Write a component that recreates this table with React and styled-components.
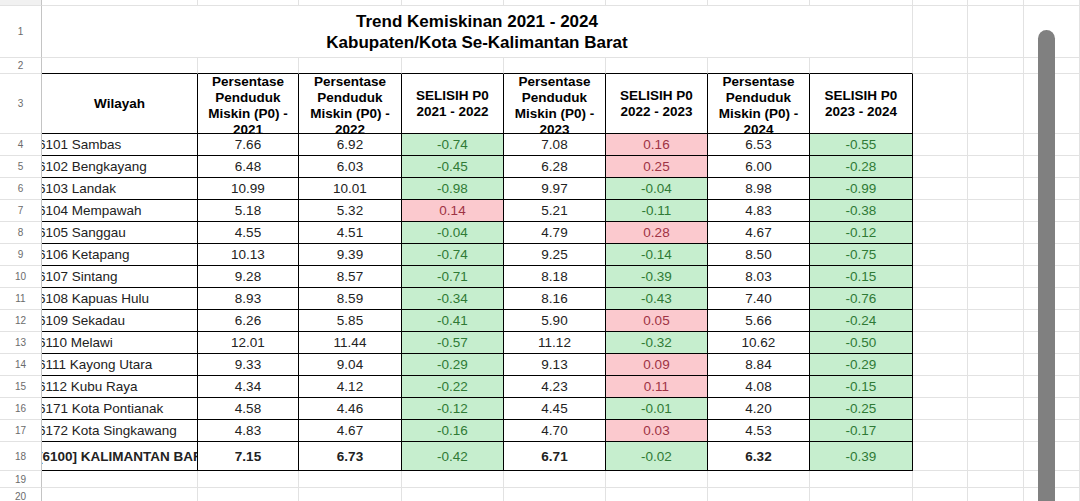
import React from "react";
import styled, { createGlobalStyle, css } from "styled-components";

const GlobalStyle = createGlobalStyle`
  html, body {
    margin: 0;
    padding: 0;
    background: #ffffff;
    overflow: hidden;
  }
  body {
    font-family: "Liberation Sans", Arial, sans-serif;
  }
`;

const rows = [
  ["6101 Sambas", "7.66", "6.92", "-0.74", "7.08", "0.16", "6.53", "-0.55"],
  ["6102 Bengkayang", "6.48", "6.03", "-0.45", "6.28", "0.25", "6.00", "-0.28"],
  ["6103 Landak", "10.99", "10.01", "-0.98", "9.97", "-0.04", "8.98", "-0.99"],
  ["6104 Mempawah", "5.18", "5.32", "0.14", "5.21", "-0.11", "4.83", "-0.38"],
  ["6105 Sanggau", "4.55", "4.51", "-0.04", "4.79", "0.28", "4.67", "-0.12"],
  ["6106 Ketapang", "10.13", "9.39", "-0.74", "9.25", "-0.14", "8.50", "-0.75"],
  ["6107 Sintang", "9.28", "8.57", "-0.71", "8.18", "-0.39", "8.03", "-0.15"],
  ["6108 Kapuas Hulu", "8.93", "8.59", "-0.34", "8.16", "-0.43", "7.40", "-0.76"],
  ["6109 Sekadau", "6.26", "5.85", "-0.41", "5.90", "0.05", "5.66", "-0.24"],
  ["6110 Melawi", "12.01", "11.44", "-0.57", "11.12", "-0.32", "10.62", "-0.50"],
  ["6111 Kayong Utara", "9.33", "9.04", "-0.29", "9.13", "0.09", "8.84", "-0.29"],
  ["6112 Kubu Raya", "4.34", "4.12", "-0.22", "4.23", "0.11", "4.08", "-0.15"],
  ["6171 Kota Pontianak", "4.58", "4.46", "-0.12", "4.45", "-0.01", "4.20", "-0.25"],
  ["6172 Kota Singkawang", "4.83", "4.67", "-0.16", "4.70", "0.03", "4.53", "-0.17"],
];
const total = ["[6100] KALIMANTAN BARAT", "7.15", "6.73", "-0.42", "6.71", "-0.02", "6.32", "-0.39"];

const headers = [
  "Wilayah",
  "Persentase Penduduk Miskin (P0) - 2021",
  "Persentase Penduduk Miskin (P0) - 2022",
  "SELISIH P0 2021 - 2022",
  "Persentase Penduduk Miskin (P0) - 2023",
  "SELISIH P0 2022 - 2023",
  "Persentase Penduduk Miskin (P0) - 2024",
  "SELISIH P0 2023 - 2024",
];

const diffCols = [3, 5, 7];

const Sheet = styled.div`
  position: relative;
  width: 1080px;
  height: 501px;
  overflow: hidden;
  display: grid;
  grid-template-columns: 42px 156px 101px 103px 102px 102px 102px 102px 103px 55px 56px 1fr;
  grid-template-rows: 6px 52px 16px 60px repeat(14, 22px) 29px 17px 17px 17px;
`;

const Cell = styled.div`
  box-sizing: border-box;
  border-right: 1px solid ${(p) => (p.$rb ? "#000" : "#e2e2e2")};
  border-bottom: 1px solid ${(p) => (p.$bb ? "#000" : "#e2e2e2")};
  display: flex;
  align-items: center;
  justify-content: center;
  overflow: hidden;
  white-space: nowrap;
  font-size: 13.5px;
  color: #222;
  font-weight: ${(p) => (p.$bold ? 700 : 400)};
  ${(p) =>
    p.$fill === "green" &&
    css`
      background: #c6eece;
      color: #2f7a35;
    `}
  ${(p) =>
    p.$fill === "red" &&
    css`
      background: #fbc9ce;
      color: #9e3344;
    `}
`;

const RowHead = styled.div`
  box-sizing: border-box;
  border-right: 1px solid #c4c4c4;
  border-bottom: 1px solid #e2e2e2;
  background: ${(p) => (p.$corner ? "#f1f1f1" : "#fff")};
  display: flex;
  align-items: center;
  justify-content: center;
  font-size: 10px;
  color: #6b6b6b;
`;

const Title = styled(Cell)`
  grid-column: 2 / 10;
  flex-direction: column;
  font-size: 17px;
  font-weight: 700;
  color: #000;
  line-height: 21px;
`;

const HeadCell = styled(Cell)`
  white-space: normal;
  text-align: center;
  font-weight: 700;
  color: #000;
  line-height: 16px;
  padding: ${(p) => (p.$tall ? "4px 7px 0" : "0 7px")};
`;

const NameCell = styled(Cell)`
  justify-content: flex-start;
  text-indent: -4px;
`;

const Scrollbar = styled.div`
  position: absolute;
  left: 1038px;
  top: 30px;
  width: 17px;
  height: 480px;
  background: #808080;
  border-radius: 9px 9px 0 0;
`;

const blank = (n, key, extra = {}) =>
  Array.from({ length: n }, (_, i) => <Cell key={`${key}-${i}`} {...extra} />);

export default function App() {
  const dataRow = (r, idx, bold) => {
    return [
      <RowHead key={`rh${idx}`}>{idx}</RowHead>,
      <NameCell key={`n${idx}`} $rb $bb $bold={bold}>
        {r[0]}
      </NameCell>,
      ...r.slice(1).map((v, j) => {
        const col = j + 1;
        const isDiff = diffCols.includes(col);
        const fill = isDiff ? (v.startsWith("-") ? "green" : "red") : undefined;
        return (
          <Cell key={`c${idx}-${col}`} $rb $bb $fill={fill} $bold={bold && !isDiff}>
            {v}
          </Cell>
        );
      }),
      ...blank(3, `e${idx}`),
    ];
  };

  return (
    <>
      <GlobalStyle />
      <Sheet>
        <RowHead $corner />
        {blank(11, "top")}

        <RowHead>1</RowHead>
        <Title>
          <span>Trend Kemiskinan 2021 - 2024</span>
          <span>Kabupaten/Kota Se-Kalimantan Barat</span>
        </Title>
        {blank(3, "r1")}

        <RowHead>2</RowHead>
        {blank(8, "r2", { $bb: true })}
        {blank(3, "r2b")}

        <RowHead>3</RowHead>
        {headers.map((h, i) => (
          <HeadCell key={h + i} $rb $bb $tall={h.startsWith("Persentase")}>
            {h}
          </HeadCell>
        ))}
        {blank(3, "r3")}

        {rows.map((r, i) => dataRow(r, i + 4, false))}
        {dataRow(total, 18, true)}

        {[19, 20, 21].map((n) => [
          <RowHead key={`rh${n}`}>{n}</RowHead>,
          ...blank(11, `b${n}`),
        ])}
        <Scrollbar />
      </Sheet>
    </>
  );
}
